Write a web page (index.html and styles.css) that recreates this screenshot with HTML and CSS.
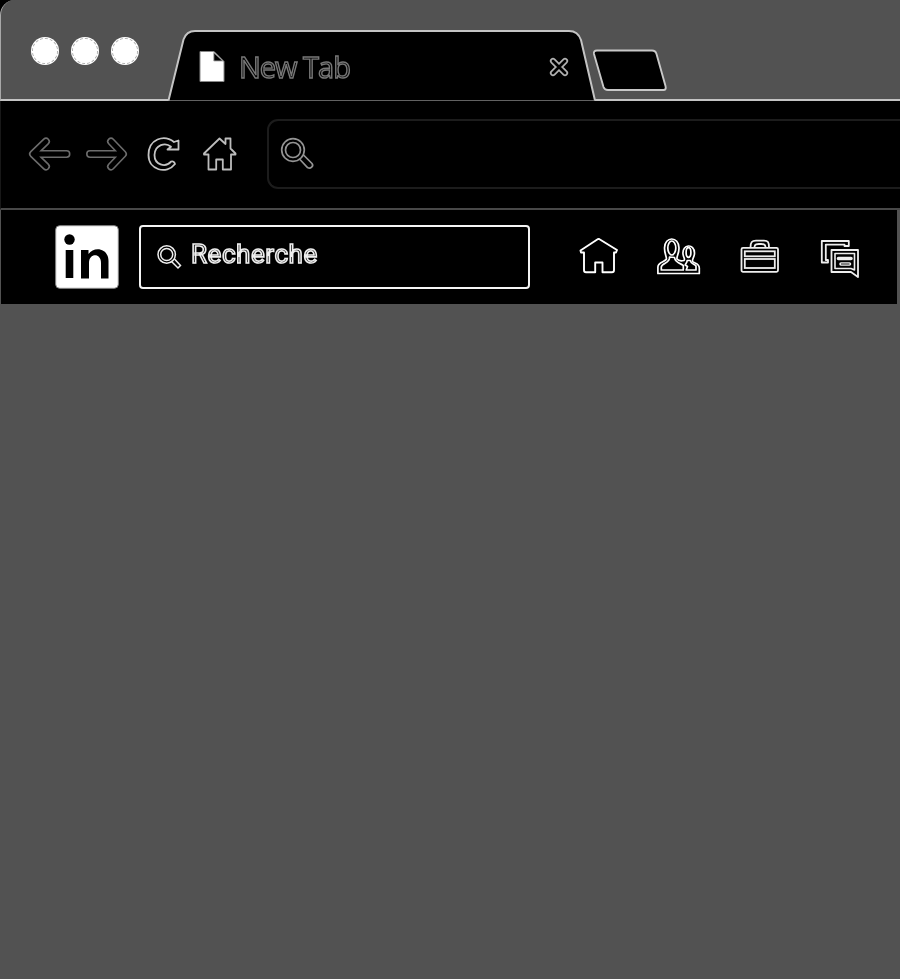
FILE: index.html
```
<!DOCTYPE html>
<html lang="fr">
<head>
<meta charset="utf-8">
<title>New Tab</title>
<link rel="stylesheet" href="styles.css">
</head>
<body>
<div class="window">
  <header class="tab-strip">
    <div class="lights"><i class="light"></i><i class="light"></i><i class="light"></i></div>
    <div class="tab">
      <svg class="tab-shape" width="431" height="74" viewBox="0 0 431 74"><path d="M1.500 72.500 L16.500 11.500 Q19.500 3 28 3 H402 Q411 3 414 12 L428 72.500" fill="#000" stroke="#c4c4c4" stroke-width="2"/></svg>
      <svg class="doc-icon" width="26" height="34" viewBox="0 0 26 34"><path d="M1 1.500 H15 L25 11.500 V31.500 H1 Z" fill="#fff" stroke="#888"/><path d="M14.800 2.500 V11 H23.800 Z" fill="#000" stroke="#aaa" stroke-width=".9"/></svg>
      <span class="tab-title">New Tab</span>
      <svg class="close-icon" width="22" height="22" viewBox="0 0 22 22"><path d="M5 5 L17 17 M17 5 L5 17" stroke="#b0b0b0" stroke-width="6.200" stroke-linecap="round"/><path d="M5 5 L17 17 M17 5 L5 17" stroke="#000" stroke-width="2.800" stroke-linecap="round"/></svg>
    </div>
    <svg class="new-tab" width="76" height="44" viewBox="0 0 76 44"><path d="M5 1.500 H60 Q63.500 1.500 64.500 5 L73.500 37 Q74.500 41 71.500 41 H16 Q12.500 41 11.500 38 L2 5 Q1.300 1.500 5 1.500 Z" fill="#000" stroke="#c8c8c8" stroke-width="1.900"/></svg>
  </header>
  <div class="toolbar">
    <svg class="nav-icon back" width="44" height="38" viewBox="0 0 44 38"><path d="M18 5.500 L5 18 L18 30.500 M7 18 H38.500" fill="none" stroke="#6c6c6c" stroke-width="8" stroke-linecap="round" stroke-linejoin="round"/><path d="M18 5.500 L5 18 L18 30.500 M7 18 H38.500" fill="none" stroke="#000" stroke-width="4.800" stroke-linecap="round" stroke-linejoin="round"/></svg>
    <svg class="nav-icon forward" width="44" height="38" viewBox="0 0 44 38"><path d="M26 5.500 L38 18 L26 30.500 M36 18 H5" fill="none" stroke="#6c6c6c" stroke-width="8" stroke-linecap="round" stroke-linejoin="round"/><path d="M26 5.500 L38 18 L26 30.500 M36 18 H5" fill="none" stroke="#000" stroke-width="4.800" stroke-linecap="round" stroke-linejoin="round"/></svg>
    <svg class="nav-icon reload" width="36" height="38" viewBox="0 0 36 38"><path d="M27 6 L31.500 4.500 V13.500 H20.500 L24 10.800 C18.500 6 8 8.500 7.500 19 C7.500 29 18.500 32 24 25.700 Q27 24.500 28 28 C19.500 39 1.500 34 1.500 19 C1.500 3 17 -2 27 6 Z" fill="#000" stroke="#c4c4c4" stroke-width="1.800" stroke-linejoin="round"/></svg>
    <svg class="nav-icon home" width="36" height="38" viewBox="0 0 36 38"><path d="M2 17.500 L17.500 2.500 L23.500 8 V2.500 H28.500 V12.500 L33.500 17.500 V18.500 H29 V33.500 H20.800 V23.500 H14.200 V33.500 H6.500 V18.500 H2 Z" fill="#000" stroke="#bcbcbc" stroke-width="1.800" stroke-linejoin="round"/></svg>
    <div class="address">
      <svg width="36" height="36" viewBox="0 0 36 36"><g fill="none" stroke="#949494" stroke-width="1.700"><path d="M19.500 23 L27.500 31.500 C30.500 33.500 34 30 32 27.500 L23.500 19"/><circle cx="13" cy="14" r="11.300" fill="#000"/><circle cx="13" cy="14" r="7.500"/></g></svg>
    </div>
  </div>
  <nav class="site-nav">
    <svg class="logo" width="64" height="64" viewBox="0 0 64 64"><rect x=".7" y=".7" width="62.600" height="62.600" rx="4" fill="#fff" stroke="#888" stroke-width="1"/><g fill="#000"><circle cx="14.500" cy="14.500" r="5.200"/><path d="M10.700 25 H18.300 V53 H10.700 Z M26 25 H33.500 V29 C39 21 53.500 23 53.500 36 V53.500 H46 V38 C46 27.500 34 28 34 38 V53.500 H26 Z"/></g></svg>
    <div class="search">
      <svg width="26" height="26" viewBox="0 0 26 26"><g fill="none" stroke="#eee" stroke-width="1.500"><path d="M15 17 L22 24 L24.500 21.500 L18 14.500"/><circle cx="10.700" cy="10.500" r="8.700" fill="#000"/><circle cx="10.700" cy="10.500" r="6"/></g></svg>
      <span class="search-label">Recherche</span>
    </div>
    <div class="links">
      <svg width="44" height="40" viewBox="0 0 44 40"><path d="M4.500 13.500 L22 2 Q22.500 1.700 23.500 2.200 L41 13 L40 15.500 H38 V33 Q38 35.300 36 35.300 H26.500 V25.500 H19.200 V35.300 H10 Q8 35.300 8 33 V15.500 H5 Z" fill="none" stroke="#fff" stroke-width="1.900" stroke-linejoin="round"/></svg>
      <svg width="44" height="40" viewBox="0 0 44 40"><g fill="none" stroke="#fff" stroke-width="1.700" stroke-linejoin="round"><path d="M.9 36.500 V30 C1 25 8 25 9.500 22 C9.500 19 7.500 17 7.500 11 C7.500 -1 22 -1 22 11 C22 17 19.500 19 20 22 C21.500 24 24.500 24 27 23.500 C28.500 22 26.500 21 26 17 C25 7 37.500 6 37.500 16 C37.500 20 35 22 35.500 24.500 C37.500 26.500 42.300 26 42.300 31 V36.500 Z"/><ellipse cx="14.800" cy="11" rx="4" ry="7"/><path d="M12.500 20 C13.500 26 4.300 26.500 4.300 30 V33 H26.300 V28.500 C25.300 27 18 26 17.500 20.500 Z"/><ellipse cx="31.500" cy="15.500" rx="2.400" ry="4.800"/><path d="M29.200 33 H39 V29 C38 27 33.700 27 33.200 23.500 H30.200 C30.200 26 28.200 27 28.200 28 L30.500 29.500 Z"/></g></svg>
      <svg width="44" height="40" viewBox="0 0 44 40"><g fill="none" stroke="#eee" stroke-width="1.800"><rect x="3.500" y="10.800" width="36.500" height="24" rx="1.500"/><path d="M12.500 10.500 C12.500 5 14 3.600 18 3.600 H26 C30 3.600 31 5 31 10.500 M16.500 10 C16.500 6.500 20 7 22 7 C24 7 27.500 6.500 27.500 10"/><rect x="6.800" y="14.300" width="30" height="5"/><rect x="6.800" y="22" width="30" height="9"/></g></svg>
      <svg width="44" height="40" viewBox="0 0 44 40"><g fill="none" stroke="#eee" stroke-width="1.800" stroke-linejoin="round"><path d="M2.800 4 H29.800 V9 H25.500 V7.600 H6.800 V23 H9 V25.500 H2.800 Z"/><path d="M12.500 13 H39 V40 L32 35 H12.500 Z" fill="#000"/><path d="M16 16.500 H35.500 V33 L32 31.500 H16 Z" stroke-width="1.600"/><path d="M19.500 21.500 H32 M22 27 H30.500" stroke-width="3.600" stroke-linecap="round"/><path d="M22 27 H30.500" stroke="#000" stroke-width=".9"/></g></svg>
    </div>
  </nav>
  <main class="page"></main>
</div>
</body>
</html>
```
FILE: styles.css
```
* { box-sizing: border-box; }
body { margin: 0; background: #fff; }
svg { display: block; flex: none; overflow: visible; }
.window { width: 900px; height: 979px; display: flex; flex-direction: column; background: #525252; overflow: hidden; }
.tab-strip {
  height: 101px; display: flex; align-items: flex-start;
  background: #525252; border-left: 1px solid #a8a8a8; border-bottom: 2px solid #c4c4c4;
  border-top-left-radius: 15px; box-shadow: -15px -15px 0 #000;
}
.lights { display: flex; gap: 12px; padding: 37px 0 0 30px; }
.light { width: 28px; height: 28px; border-radius: 50%; background: #fff; outline: 1px dashed #aaa; outline-offset: -2px; }
.tab { position: relative; width: 431px; height: 74px; margin: 28px 0 -3px 28px; display: flex; align-items: center; padding: 0 28px 0 32px; }
.tab-shape { position: absolute; left: 0; top: 0; }
.doc-icon, .tab-title, .close-icon { position: relative; }
.doc-icon { margin-top: 4px; }
.tab-title {
  margin: 4px 0 0 14px; font: 29px/34px "Open Sans", sans-serif; letter-spacing: -1px;
  color: #000; -webkit-text-stroke: 1.4px #777; white-space: nowrap; will-change: transform;
}
.close-icon { margin-left: auto; margin-top: 3px; }
.new-tab { margin: 49px 0 0 -6px; }
.toolbar { height: 109px; display: flex; align-items: center; background: #000; border-bottom: 2px solid #484848; border-left: 1px solid #181818; }
.back { margin-left: 27px; }
.forward { margin-left: 13px; }
.reload { margin-left: 18px; }
.home { margin-left: 19px; }
.address { height: 70px; flex: 1; margin: -1px 0 0 29px; padding-left: 11px; border: 2px solid #1c1c1c; border-right: 0; border-radius: 11px 0 0 11px; display: flex; align-items: center; }
.site-nav { height: 94px; margin: 0 3px 0 1px; background: #000; display: flex; align-items: center; }
.logo { margin-left: 54px; }
.search { width: 391px; height: 64px; margin-left: 20px; border: 2px solid #f4f4f4; border-radius: 4px; display: flex; align-items: center; padding-left: 15px; }
.search-label { margin: -7px 0 0 9px; font: 26px/32px Roboto, sans-serif; letter-spacing: .55px; color: #000; -webkit-text-stroke: 1.6px #eee; will-change: transform; }
.links { display: flex; gap: 37px; margin-left: 46px; }
.page { flex: 1; }
```
